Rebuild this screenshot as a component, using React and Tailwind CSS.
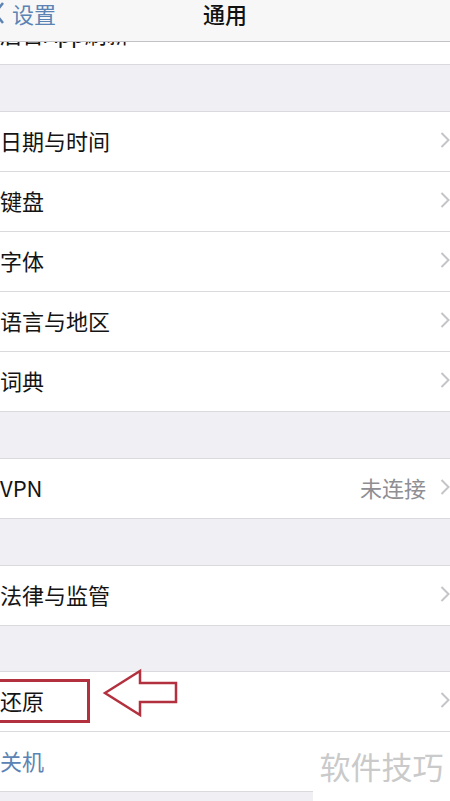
import React from "react";

const font = { fontFamily: '"Noto Sans CJK SC", "Noto Sans", sans-serif' };

function Chevron() {
  return (
    <svg width="10" height="18" viewBox="0 0 10 18" className="shrink-0">
      <polyline points="1.5,2 8.5,9 1.5,16" fill="none" stroke="#c4c4c9" strokeWidth="2" />
    </svg>
  );
}

function Row({ label, value, blue }) {
  return (
    <div className="flex h-[60px] items-center justify-between border-b border-[#dadade] bg-white pb-[3px]">
      <span className={`text-[22px] leading-[24px] ${blue ? "text-[#5b83b3]" : "text-[#141414]"}`}>{label}</span>
      {!blue && (
        <div className="flex items-center gap-[14px]">
          {value && <span className="text-[22px] leading-[24px] text-[#8e8e93]">{value}</span>}
          <Chevron />
        </div>
      )}
    </div>
  );
}

function Gap({ h }) {
  return <div className={`${h} border-b border-[#dadade] bg-[#efeff4]`} />;
}

export default function App() {
  return (
    <div className="relative h-[801px] w-[450px] overflow-hidden bg-[#efeff4]" style={font}>
      <div className="flex flex-col">
        <div className="mt-[5px] flex h-[60px] items-center border-b border-[#dadade] bg-white pb-[3px]">
          <span className="text-[22px] leading-[24px] text-[#141414]">后台App刷新</span>
        </div>
        <Gap h="h-[47px]" />
        <Row label="日期与时间" />
        <Row label="键盘" />
        <Row label="字体" />
        <Row label="语言与地区" />
        <Row label="词典" />
        <Gap h="h-[47px]" />
        <Row label="VPN" value="未连接" />
        <Gap h="h-[47px]" />
        <Row label="法律与监管" />
        <Gap h="h-[46px]" />
        <Row label="还原" />
        <Row label="关机" blue />
      </div>

      <div className="absolute left-0 top-0 h-[42px] w-[450px] border-b border-[#c2c2c6] bg-[#f7f7f8]">
        <svg width="12" height="24" viewBox="0 0 12 24" className="absolute left-[-7px] top-[1px]">
          <polyline points="10,2 2,12 10,22" fill="none" stroke="#5b83b3" strokeWidth="2.5" />
        </svg>
        <span className="absolute left-[12px] top-[2px] text-[22px] leading-[22px] text-[#5b83b3]">设置</span>
        <span className="absolute left-0 right-0 top-[2px] text-center text-[22px] font-medium leading-[22px] text-[#111]">通用</span>
      </div>

      <div className="absolute left-[-6px] top-[679px] h-[44px] w-[96px] border-[3px] border-[#b3313f]" />

      <svg width="80" height="50" viewBox="0 0 80 50" className="absolute left-[100px] top-[668px]">
        <polygon
          points="5,25 40,3 40,15 76,15 76,34 40,34 40,47"
          fill="white"
          stroke="#b3313f"
          strokeWidth="2.5"
          strokeLinejoin="miter"
        />
      </svg>

      <div className="absolute left-[313px] top-[740px] flex h-[61px] w-[137px] items-start justify-center bg-white pt-[10px]">
        <span className="text-[31px] leading-[31px] text-[#cacaca]">软件技巧</span>
      </div>
    </div>
  );
}
